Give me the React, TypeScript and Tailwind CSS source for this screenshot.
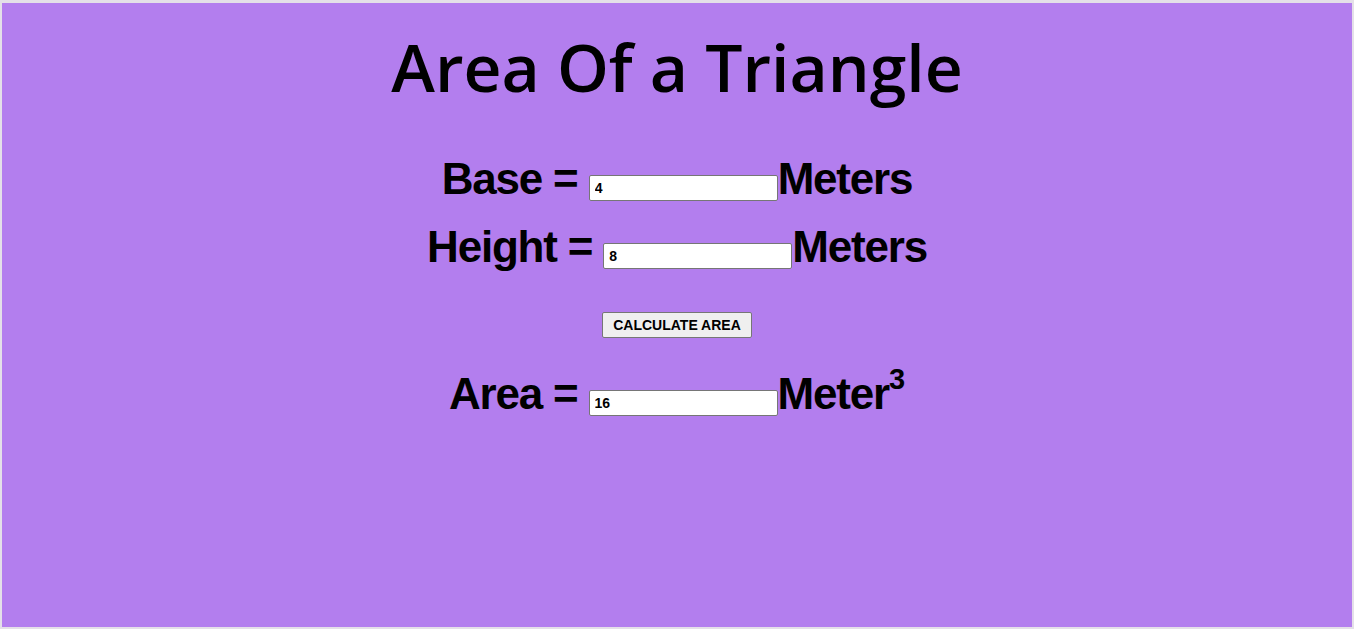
export default function App() {
  const label = "font-['Liberation_Sans',Arial,sans-serif] font-bold text-[44px] leading-[68px] tracking-[-1.2px] text-black";
  const field =
    "w-[189px] h-[26px] border border-[#767676] rounded-[2px] bg-white px-[5px] text-[14px] font-bold font-['Liberation_Sans',Arial,sans-serif] tracking-normal text-black outline-none align-[1px]";

  return (
    <div className="h-[629px] bg-[#e4e0e8] pt-[3px] px-[2px] pb-[2px]">
      <div className="h-full bg-[#b37eee] text-center">
        <h1 className="pt-[27px] text-[66px] leading-[72px] font-semibold font-['Open_Sans',sans-serif] text-black">
          Area Of a Triangle
        </h1>

        <div className="mt-[43px]">
          <div className={label}>
            Base = <input className={field} defaultValue="4" />
            Meters
          </div>
          <div className={label}>
            Height = <input className={field} defaultValue="8" />
            Meters
          </div>
        </div>

        <button className="mt-[31px] h-[26px] w-[150px] border border-[#767676] rounded-[2px] bg-[#efefef] text-[14px] font-bold font-['Liberation_Sans',Arial,sans-serif] text-black">
          CALCULATE AREA
        </button>

        <div className={"mt-[22px] " + label}>
          Area = <input className={field} defaultValue="16" />
          Meter<sup className="text-[29px] top-[-20px] tracking-normal">3</sup>
        </div>
      </div>
    </div>
  );
}
